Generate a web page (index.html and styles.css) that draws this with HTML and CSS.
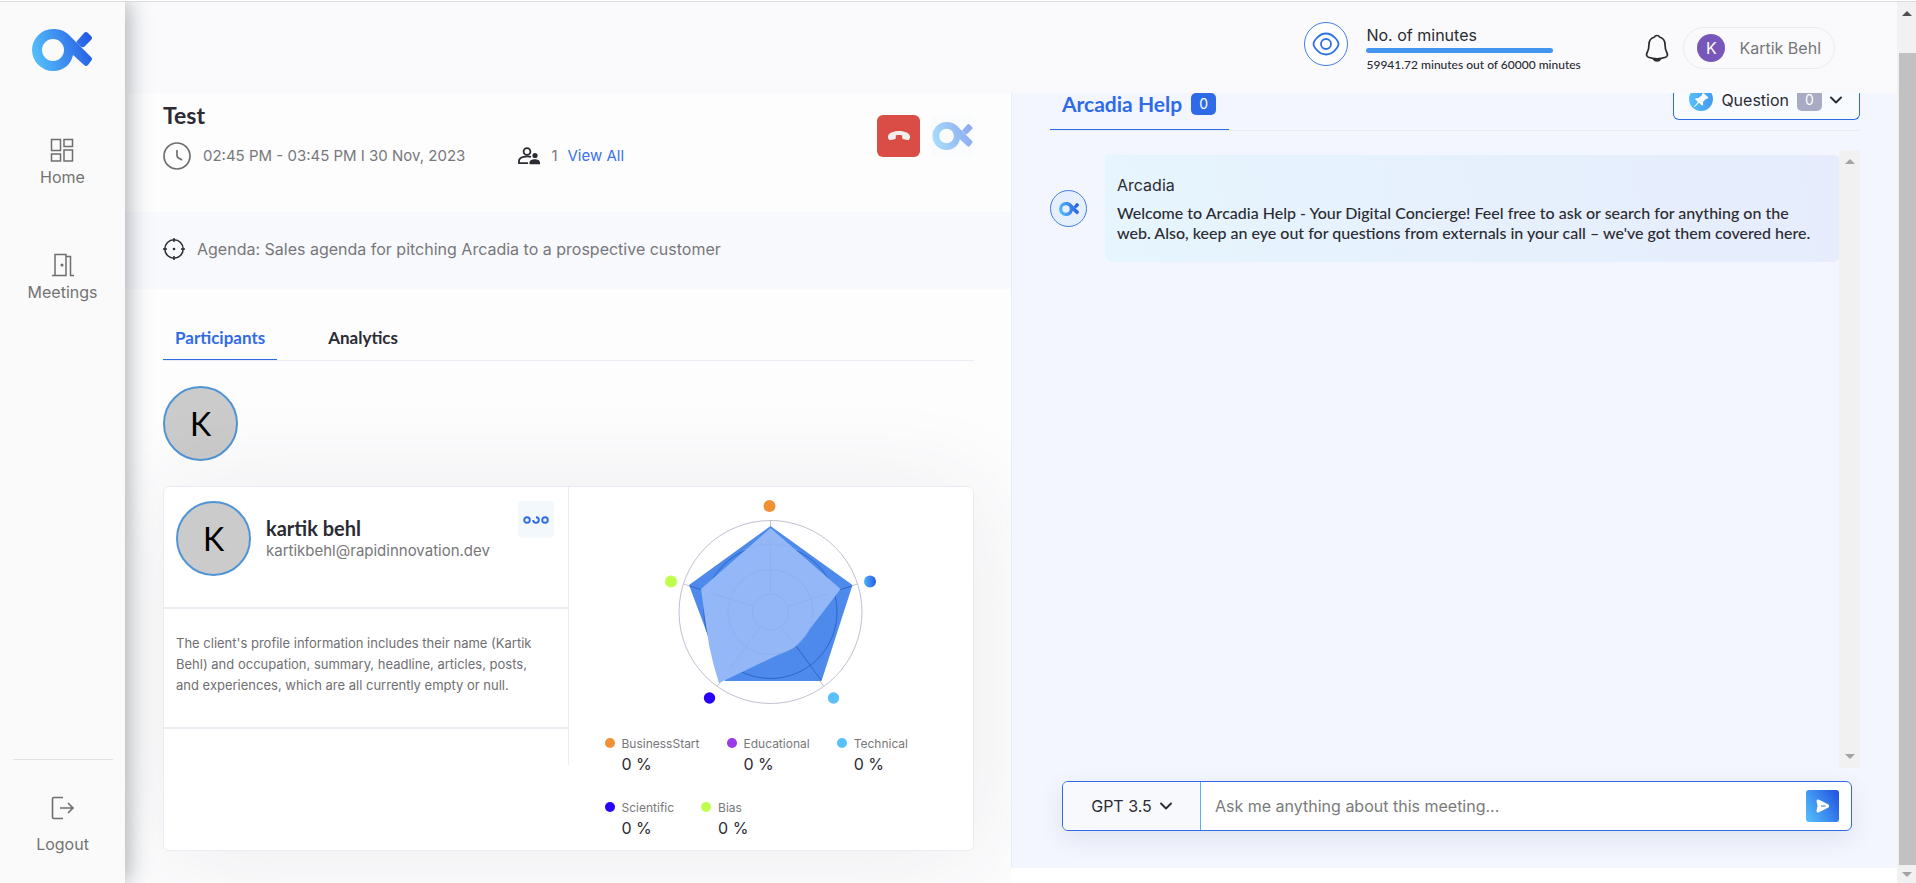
FILE: index.html
```html
<!DOCTYPE html>
<html lang="en">
<head>
<meta charset="utf-8">
<title>Arcadia Meeting</title>
<link rel="stylesheet" href="styles.css">
</head>
<body>
<svg class="defs" aria-hidden="true">
  <defs>
    <linearGradient id="brand" gradientUnits="userSpaceOnUse" x1="0" y1="30" x2="60" y2="12">
      <stop offset="0" stop-color="#56c2fb"/><stop offset="1" stop-color="#2459e3"/>
    </linearGradient>
    <linearGradient id="dotblue" x1="0" y1="0" x2="1" y2="0">
      <stop offset="0" stop-color="#4fb4f6"/><stop offset="1" stop-color="#2559e4"/>
    </linearGradient>
    <linearGradient id="pin" x1="0" y1="0" x2="1" y2="0">
      <stop offset="0" stop-color="#56c0fb"/><stop offset="1" stop-color="#439bee"/>
    </linearGradient>
    <symbol id="logo" viewBox="0 0 60 42">
      <path fill="url(#brand)" fill-rule="evenodd" d="M21 0c7 0 12 2 16 6l22 22q2 2 0 4l-3 4q-2 2-4 0L41 26C39 36 31 42 21 42A21 21 0 0 1 21 0zM21 10a11 11 0 1 0 0 22a11 11 0 1 0 0-22z"/>
      <path fill="url(#brand)" d="M45 12l7-8q2-2 4 0l3 3q2 2 0 4l-7 7q-2 1-4-1l-3-3q-1-1 0-2z"/>
    </symbol>
    <symbol id="chevron" viewBox="0 0 12 8"><path d="M1 1.500l5 5 5-5" fill="none" stroke="#2b2b33" stroke-width="1.900" stroke-linecap="round" stroke-linejoin="round"/></symbol>
  </defs>
</svg>
<div class="app">
  <nav class="sidebar">
    <a class="brand" href="#" aria-label="Arcadia"><svg width="60" height="42"><use href="#logo"/></svg></a>
    <a class="nav-item" href="#">
      <svg width="24" height="24" viewBox="0 0 24 24" fill="none" stroke="#6e6e6e" stroke-width="1.500"><path d="M1.500 1.500h9v11h-9zM14 1.500h8.500v7H14zM1.500 16h9v7h-9zM14 12h8.500v11H14z"/></svg>
      <span>Home</span>
    </a>
    <a class="nav-item nav-meet" href="#">
      <svg width="24" height="24" viewBox="0 0 24 24" fill="none" stroke="#6e6e6e" stroke-width="1.500"><path d="M1 22.500h14V1.500H4v21M15 3.500h4.500v19H23"/><circle cx="11" cy="12" r=".8" fill="#6e6e6e"/></svg>
      <span>Meetings</span>
    </a>
    <a class="nav-item logout" href="#">
      <svg width="24" height="24" viewBox="0 0 24 24" fill="none" stroke="#6e6e6e" stroke-width="1.600"><path d="M12 1.500H3Q1.500 1.500 1.500 3v18q0 1.500 1.500 1.500h9M9 12h13M17 7l5 5-5 5"/></svg>
      <span>Logout</span>
    </a>
  </nav>

  <div class="page">
    <header class="topbar">
      <div class="usage">
        <span class="eye">
          <svg width="28" height="24" viewBox="0 0 28 24" fill="none" stroke="#2f6fe8" stroke-width="1.800"><path d="M1.500 12C1.500 9 7 1.500 14 1.500S26.500 9 26.500 12 21 22.500 14 22.500 1.500 15 1.500 12z"/><circle cx="14" cy="12" r="5"/></svg>
        </span>
        <div class="usage-text">
          <span class="usage-title">No. of minutes</span>
          <span class="usage-bar"></span>
          <span class="usage-note">59941.72 minutes out of 60000 minutes</span>
        </div>
      </div>
      <button class="bell" type="button" aria-label="Notifications">
        <svg width="24" height="28" viewBox="0 0 24 28" fill="none" stroke="#2a2a2e" stroke-width="1.700" stroke-linejoin="round"><path d="M9.500 3Q10 1.500 12 1.500T14.500 3C18 4 20 7 20 10.500c0 5 .5 6 2 8.500 1 1.700.3 3.500-1.500 4.200-5 1.800-12 1.800-17 0C1.700 22.500 1 20.700 2 19c1.500-2.500 2-3.500 2-8.500C4 7 6 4 9.500 3z"/><path d="M8.500 24.800c1.500 2.800 5.500 2.800 7 0z" fill="#777"/></svg>
      </button>
      <button class="user" type="button"><span class="user-av">K</span><span>Kartik Behl</span></button>
    </header>

    <main class="content">
      <section class="meeting">
        <div class="meet-head">
          <div>
            <h1>Test</h1>
            <div class="meta">
              <svg width="28" height="28" viewBox="0 0 28 28" fill="none" stroke="#6e6e6e" stroke-width="1.700" stroke-linecap="round"><circle cx="14" cy="14" r="13"/><path d="M14 8.500v5q0 1.500 1.200 2.200l3.300 2"/></svg>
              <span class="time">02:45 PM - 03:45 PM I 30 Nov, 2023</span>
              <svg width="22" height="18" viewBox="0 0 22 18" fill="none" stroke="#2b2b33" stroke-width="1.800"><circle cx="9" cy="4.500" r="3.400"/><path d="M13 9.900C9 8.500 1 10 1 14v2.200h9"/><circle cx="17" cy="8.500" r="2.600" fill="#2b2b33" stroke="none"/><path d="M11.500 17.200v-1.500c0-4.500 10.500-4.500 10.500 0v1.500z" fill="#2b2b33" stroke="none"/></svg>
              <span class="count">1</span>
              <a href="#">View All</a>
            </div>
          </div>
          <div class="meet-actions">
            <button class="end" type="button" aria-label="End call"><svg width="22" height="10" viewBox="0 0 22 10" fill="#f3eeee"><path d="M11 0c5 0 9.500 1.500 10.800 4.500.5 1.500.2 3-.6 4-.5.6-1 .8-1.800.6l-4-.8c-.8-.2-1.200-.7-1.200-1.500V4.400c-2-.6-4.400-.6-6.400 0v2.400c0 .8-.4 1.300-1.200 1.500l-4 .8C1.800 9.300 1.300 9.100.8 8.500c-.8-1-1.100-2.500-.6-4C1.500 1.500 6 0 11 0z"/></svg></button>
            <button class="bot" type="button" aria-label="Arcadia bot"><svg width="41" height="28"><use href="#logo"/></svg></button>
          </div>
        </div>

        <div class="agenda">
          <svg width="22" height="22" viewBox="0 0 22 22" fill="none" stroke="#2b2b33" stroke-width="1.500"><circle cx="11" cy="11" r="9.200"/><path d="M11 0v4M11 18v4M0 11h4M18 11h4"/><circle cx="11" cy="11" r="1.300" fill="#2b2b33" stroke="none"/></svg>
          <span>Agenda: Sales agenda for pitching Arcadia to a prospective customer</span>
        </div>

        <div class="tabs">
          <button class="tab active" type="button">Participants</button>
          <button class="tab" type="button">Analytics</button>
        </div>

        <div class="avatar">K</div>

        <article class="card">
          <div class="profile">
            <div class="profile-top">
              <div class="avatar">K</div>
              <div class="who">
                <h2>kartik behl</h2>
                <span>kartikbehl@rapidinnovation.dev</span>
              </div>
              <button class="more" type="button" aria-label="More"><svg width="26" height="8" viewBox="0 0 26 8" fill="none" stroke="#2f6be6" stroke-width="1.900"><circle cx="4" cy="4" r="2.800"/><path d="M13 1.200A2.800 2.800 0 1 1 10.200 4"/><circle cx="22" cy="4" r="2.800"/></svg></button>
            </div>
            <p>The client's profile information includes their name (Kartik Behl) and occupation, summary, headline, articles, posts, and experiences, which are all currently empty or null.</p>
          </div>
          <div class="stats">
            <svg class="radar" width="212" height="204" viewBox="0 0 212 204">
              <g fill="none" stroke="#c3bfd3" stroke-width="1"><circle cx="105.500" cy="112" r="91.500"/><path d="M105.500 20v92M192.500 84l-87 28M158.500 186l-53-74M52.500 186l53-74M18.500 84l87 28"/></g>
              <path fill="#4d8aeb" d="M105.500 26L187.500 85 156.500 181H60L24 85z"/>
              <g fill="none" stroke="#2d65c8"><circle cx="105.500" cy="112" r="66.500"/><path d="M131 146l25 34M174 90l13-4M25 86l12 4"/></g>
              <path fill="#93b7f7" d="M105.500 28L175.500 89 Q152 120 145.500 128 Q141 136 131 146 Q126 150 115 154L54 183 Q48 165 44 145 Q40 118 36 89z"/>
              <g fill="none" stroke="#8bade9" opacity=".5"><circle cx="105.500" cy="112" r="18"/><circle cx="105.500" cy="112" r="42.500"/><path d="M78 50a66.500 66.500 0 0 1 55 0M105.500 40v54M88 106L48 94M123 106l40-12M95 127l-30 42M116 127l12 15"/></g>
              <circle cx="104.500" cy="6" r="6" fill="#f19135"/><circle cx="205" cy="81.500" r="6" fill="url(#dotblue)"/><circle cx="168.500" cy="198" r="5.700" fill="#59c0fc"/><circle cx="44.500" cy="198" r="5.700" fill="#2600fb"/><circle cx="6" cy="81.500" r="6" fill="#beff4e"/>
            </svg>
            <ul class="legend">
              <li class="orange"><span>BusinessStart</span><b>0 %</b></li>
              <li class="purple"><span>Educational</span><b>0 %</b></li>
              <li class="sky"><span>Technical</span><b>0 %</b></li>
              <li class="indigo"><span>Scientific</span><b>0 %</b></li>
              <li class="lime"><span>Bias</span><b>0 %</b></li>
            </ul>
          </div>
        </article>
      </section>

      <section class="help">
        <div class="help-tabs">
          <button class="help-tab" type="button">Arcadia Help <span class="badge">0</span></button>
          <button class="question" type="button">
            <svg width="24" height="18" viewBox="0 6 24 18"><circle cx="12" cy="12" r="12" fill="url(#pin)"/><path fill="#fff" d="M14.500 6l5 4.500-1.500 1.500-1-.3-3.200 3.300c.6 1.600.2 3-.6 3.800L10 15.800 5.700 20 5 19.400l4-4.500-3.200-3c1-.8 2.400-1.200 4-.8l3.300-3.100-.2-1z"/></svg>
            <span>Question</span><span class="badge grey">0</span>
            <svg class="caret" width="12" height="8"><use href="#chevron"/></svg>
          </button>
        </div>
        <div class="chat">
          <div class="messages">
            <div class="bot-av"><svg width="20" height="14"><use href="#logo"/></svg></div>
            <div class="bubble">
              <span class="from">Arcadia</span>
              <p>Welcome to Arcadia Help - Your Digital Concierge! Feel free to ask or search for anything on the<br>web. Also, keep an eye out for questions from externals in your call – we've got them covered here.</p>
            </div>
          </div>
          <div class="track"><i class="up"></i><i class="down"></i></div>
        </div>
        <form class="ask">
          <button class="model" type="button">GPT 3.5 <svg width="12" height="8"><use href="#chevron"/></svg></button>
          <input type="text" aria-label="Question" placeholder="Ask me anything about this meeting...">
          <button class="send" type="button" aria-label="Send"><svg width="14" height="14" viewBox="0 0 14 14"><path fill="#fff" d="M2.500.5l10 5q1.500 1.500 0 3l-10 5Q.5 14 .5 12L1.500 7 .5 2Q.5 0 2.500.5z"/><path d="M5 7h4.500" stroke="#3577ea" stroke-width="1.200"/></svg></button>
        </form>
      </section>
    </main>
  </div>
  <div class="track page-track" aria-hidden="true"><i class="up"></i><div class="thumb"></div><i class="down"></i></div>
</div>
</body>
</html>
```
FILE: styles.css
```css
* { box-sizing: border-box; }
body { margin: 0; padding-top: 1px; height: 100vh; font-family: Inter, "Noto Sans", sans-serif; font-size: 16px; color: #2b2b33; background: #fff; }
button { font: inherit; color: inherit; background: none; border: 0; padding: 0; display: flex; align-items: center; justify-content: center; }
a { text-decoration: none; }
h1, h2, p, ul { margin: 0; padding: 0; }
svg { display: block; flex: none; }
.defs { position: absolute; width: 0; height: 0; }

.app { display: flex; height: 100%; border-top: 1px solid #d9dcdd; overflow: hidden; }
.sidebar { flex: none; width: 125px; display: flex; flex-direction: column; align-items: center; background: #fafafa; padding-top: 27px; box-shadow: 2px 0 22px rgba(30, 40, 50, .4); z-index: 1; }
.brand { margin-right: 1px; }
.nav-item { display: flex; flex-direction: column; align-items: center; gap: 3px; color: #737373; line-height: 24px; margin-top: 67px; }
.nav-meet { margin-top: 64px; }
.logout { margin-top: auto; width: 100px; border-top: 1px solid #e2e2e2; padding: 36px 0 27px; gap: 12px; }

.page { flex: 1; min-width: 0; display: flex; flex-direction: column; }
.topbar { flex: none; height: 91px; background: #fafafc; display: flex; align-items: center; justify-content: flex-end; padding-right: 62px; }
.usage { display: flex; align-items: flex-start; gap: 18px; }
.eye { width: 44px; height: 44px; border: 1px solid #3f7deb; border-radius: 50%; background: #fff; display: flex; align-items: center; justify-content: center; }
.usage-text { display: flex; flex-direction: column; width: 218px; padding-top: 2px; white-space: nowrap; }
.usage-title { line-height: 22px; }
.usage-bar { width: 187px; height: 5px; margin: 2px 0 3px; border-radius: 3px; background: #4495ef; }
.usage-note { font: 500 12px/18px Lato, sans-serif; }
.bell { margin-left: 61px; }
.user { margin-left: 14px; height: 42px; padding: 0 13px; gap: 14px; border: 1px solid #ececef; border-radius: 21px; color: #77777a; }
.user-av { width: 28px; height: 28px; line-height: 28px; border-radius: 50%; background: #7857bb; color: #fff; }

.content { flex: 1; min-height: 0; display: grid; grid-template-columns: 1fr 1fr; }
.meeting { min-width: 0; background: #fdfdfe; overflow: hidden; }
.meet-head { height: 119px; display: flex; justify-content: space-between; padding: 8px 37px 0 38px; }
h1 { font: bold 23px/28px Lato, sans-serif; }
.meta { display: flex; align-items: center; margin-top: 13px; color: #77777a; font-size: 15px; line-height: 28px; }
.time { margin: 0 53px 0 12px; }
.count { margin: 0 10px 0 11px; }
.meta a { color: #3b70f0; }
.meet-actions { display: flex; gap: 11px; padding-top: 14px; }
.end, .bot { width: 43px; height: 42px; border-radius: 6px; }
.end { background: #da4c46; }
.bot { background: #fafbfd; }
.bot svg { opacity: .5; }
.agenda { height: 77px; display: flex; align-items: center; gap: 12px; padding: 0 38px 4px; background: #f8f9fd; color: #77777a; }
.tabs { display: flex; gap: 39px; margin: 28px 37px 0 38px; border-bottom: 1px solid #e9edf3; }
.tab { height: 43px; padding: 0 12px; font: bold 17px/20px Lato, sans-serif; border-bottom: 1px solid transparent; }
.tab.active { color: #2f6be6; border-color: #2f6be6; }
.avatar { flex: none; width: 75px; height: 75px; border: 2px solid #5094d6; border-radius: 50%; background: #cbcbcb; color: #000; font: 32px/72px Lato, sans-serif; text-align: center; }
.meeting > .avatar { margin: 25px 0 25px 38px; }
.card { margin: 0 37px 0 38px; height: 365px; display: grid; grid-template-columns: 1fr 1fr; background: #fff; border: 1px solid #e9edf3; border-radius: 6px; box-shadow: 0 4px 100px rgba(50, 60, 70, .09); }
.profile { height: 278px; border-right: 1px solid #e9edf3; }
.profile-top { height: 122px; display: flex; align-items: flex-start; padding: 14px 14px 0 12px; border-bottom: 2px solid #e9edf3; }
.who { flex: 1; padding: 14px 0 0 15px; color: #77777a; font-size: 15px; line-height: 20px; }
h2 { font: bold 20px/26px Lato, sans-serif; color: #2b2b33; }
.more { width: 36px; height: 37px; border-radius: 4px; background: #f3f8fd; }
.profile p { height: 120px; padding: 24px 20px 24px 12px; font-size: 13px; line-height: 21px; color: #6f6f72; border-bottom: 2px solid #e9edf3; }
.stats { padding-top: 13px; }
.radar { margin-left: 96px; }
.legend { display: flex; flex-wrap: wrap; gap: 20px 27px; margin: 29px 28px 0 36px; list-style: none; }
.legend li { position: relative; display: flex; flex-direction: column; padding-left: 17px; font-size: 12px; line-height: 22px; height: 44px; color: #77777a; }
.legend li::before { content: ""; position: absolute; left: 0; top: 5px; width: 10px; height: 10px; border-radius: 50%; background: var(--dot); }
.legend b { font-weight: 400; font-size: 16px; line-height: 18px; color: #2b2b33; }
.orange { --dot: #f19135; } .purple { --dot: #9a3ae8; } .sky { --dot: #59c0fc; } .indigo { --dot: #2600fb; } .lime { --dot: #beff4e; }

.help { min-width: 0; display: flex; flex-direction: column; margin-bottom: 15px; padding: 0 37px 37px 38px; background: #f3f6ff; border-left: 1px solid #e9edf5; }
.help-tabs { flex: none; height: 38px; display: flex; justify-content: space-between; align-items: flex-start; border-bottom: 1px solid #e7ebf2; }
.help-tab { height: 37px; padding: 0 13px 15px 12px; gap: 9px; border-bottom: 1px solid #2f6be6; color: #2f6be6; font: bold 21px/22px Lato, sans-serif; }
.badge { width: 25px; height: 22px; border-radius: 5px; background: #2f6be6; color: #fff; font: 14px/22px Inter, sans-serif; }
.question { height: 27px; padding: 0 17px 0 15px; gap: 8px; align-items: flex-start; border: 1px solid #2f6be6; border-top: 0; border-radius: 0 0 6px 6px; background: #f8fbff; line-height: 14px; }
.grey { height: 18px; border-radius: 0 0 5px 5px; background: #a9aac3; line-height: 14px; }
.caret { margin-top: 3px; }
.chat { flex: 1; min-height: 0; display: flex; margin-top: 19px; }
.messages { flex: 1; display: flex; align-items: center; align-self: flex-start; padding-top: 5px; gap: 18px; }
.bot-av { flex: none; width: 37px; height: 37px; border: 1px solid #3f7deb; border-radius: 50%; background: #e5effd; display: flex; align-items: center; justify-content: center; }
.bubble { flex: 1; height: 107px; padding: 19px 12px; border-radius: 0 5px 5px 8px; background: linear-gradient(80deg, #e6f5fe, #e6ecfc); white-space: nowrap; }
.from { line-height: 22px; }
.bubble p { margin-top: 7px; font: 500 16px/20px Lato, sans-serif; }
.track { flex: none; width: 21px; display: flex; flex-direction: column; justify-content: space-between; align-items: center; padding: 9px 0; background: #f1f1f1; }
.up, .down { border: 5px solid transparent; }
.up { border-top: 0; border-bottom-color: #a3a3a3; }
.down { border-bottom: 0; border-top-color: #a3a3a3; }
.page-track { width: 19px; padding: 9px 0 6px; }
.page-track .up { border-bottom-color: #505050; }
.thumb { flex: 1; align-self: stretch; margin: 37px 0 7px 2px; background: #c1c1c1; }
.ask { flex: none; height: 50px; display: flex; align-items: center; margin: 13px 8px 0 12px; border: 1px solid #2f6be6; border-radius: 6px; background: #fff; box-shadow: 0 8px 24px rgba(60, 70, 90, .1); overflow: hidden; padding-right: 12px; }
.model { width: 138px; height: 48px; gap: 8px; background: #f8f9fd; border-right: 1px solid #5ab0f7; }
.ask input { flex: 1; min-width: 0; border: 0; outline: 0; padding: 0 14px; font: inherit; background: none; }
.ask input::placeholder { color: #7b7b7b; opacity: 1; }
.send { width: 33px; height: 32px; border-radius: 3px; background: linear-gradient(60deg, #56c2fb, #1f4fe0); }
```
